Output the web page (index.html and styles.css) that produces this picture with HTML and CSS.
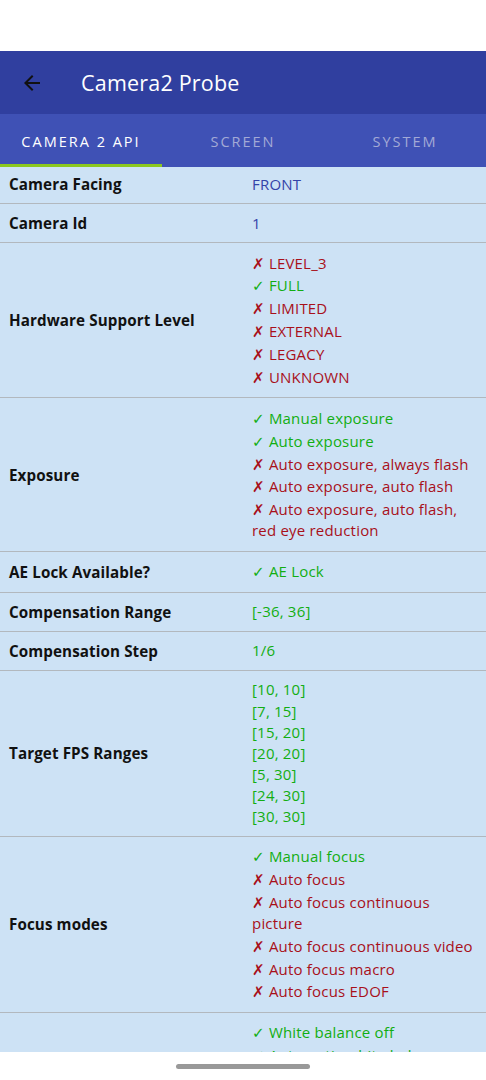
FILE: index.html
```html
<!DOCTYPE html>
<html>
<head>
<meta charset="utf-8">
<link rel="stylesheet" href="styles.css">
</head>
<body>
<div class="status"></div>
<header class="appbar">
  <svg class="back" viewBox="0 0 24 24" width="24" height="24"><path d="M20 11H7.83l5.59-5.59L12 4l-8 8 8 8 1.41-1.41L7.83 13H20v-2z" fill="#111"/></svg>
  <h1 class="title">Camera2 Probe</h1>
</header>
<nav class="tabs">
  <div class="tab active">CAMERA 2 API</div>
  <div class="tab">SCREEN</div>
  <div class="tab">SYSTEM</div>
</nav>
<main class="list">
  <div class="row first"><div class="label">Camera Facing</div><div class="vals"><div class="v blue">FRONT</div></div></div>
  <div class="row"><div class="label">Camera Id</div><div class="vals"><div class="v blue">1</div></div></div>
  <div class="row"><div class="label">Hardware Support Level</div><div class="vals">
    <div class="v no"><span class="g">✗</span> LEVEL_3</div>
    <div class="v yes"><span class="g">✓</span> FULL</div>
    <div class="v no"><span class="g">✗</span> LIMITED</div>
    <div class="v no"><span class="g">✗</span> EXTERNAL</div>
    <div class="v no"><span class="g">✗</span> LEGACY</div>
    <div class="v no"><span class="g">✗</span> UNKNOWN</div>
  </div></div>
  <div class="row"><div class="label">Exposure</div><div class="vals">
    <div class="v yes"><span class="g">✓</span> Manual exposure</div>
    <div class="v yes"><span class="g">✓</span> Auto exposure</div>
    <div class="v no"><span class="g">✗</span> Auto exposure, always flash</div>
    <div class="v no"><span class="g">✗</span> Auto exposure, auto flash</div>
    <div class="v no"><span class="g">✗</span> Auto exposure, auto flash, red eye reduction</div>
  </div></div>
  <div class="row"><div class="label">AE Lock Available?</div><div class="vals"><div class="v yes"><span class="g">✓</span> AE Lock</div></div></div>
  <div class="row"><div class="label">Compensation Range</div><div class="vals"><div class="v plain">[-36, 36]</div></div></div>
  <div class="row"><div class="label">Compensation Step</div><div class="vals"><div class="v plain">1/6</div></div></div>
  <div class="row"><div class="label">Target FPS Ranges</div><div class="vals">
    <div class="v plain">[10, 10]</div>
    <div class="v plain">[7, 15]</div>
    <div class="v plain">[15, 20]</div>
    <div class="v plain">[20, 20]</div>
    <div class="v plain">[5, 30]</div>
    <div class="v plain">[24, 30]</div>
    <div class="v plain">[30, 30]</div>
  </div></div>
  <div class="row"><div class="label">Focus modes</div><div class="vals">
    <div class="v yes"><span class="g">✓</span> Manual focus</div>
    <div class="v no"><span class="g">✗</span> Auto focus</div>
    <div class="v no"><span class="g">✗</span> Auto focus continuous picture</div>
    <div class="v no"><span class="g">✗</span> Auto focus continuous video</div>
    <div class="v no"><span class="g">✗</span> Auto focus macro</div>
    <div class="v no"><span class="g">✗</span> Auto focus EDOF</div>
  </div></div>
  <div class="row"><div class="label">White Balance</div><div class="vals">
    <div class="v yes"><span class="g">✓</span> White balance off</div>
    <div class="v yes"><span class="g">✓</span> Automatic white balance</div>
    <div class="v yes"><span class="g">✓</span> Incandescent</div>
    <div class="v yes"><span class="g">✓</span> Fluorescent</div>
    <div class="v yes"><span class="g">✓</span> Warm fluorescent</div>
    <div class="v yes"><span class="g">✓</span> Daylight</div>
    <div class="v yes"><span class="g">✓</span> Cloudy daylight</div>
  </div></div>
</main>
<div class="navbar"><div class="pill"></div></div>
</body>
</html>
```
FILE: styles.css
```css
html, body {
  margin: 0;
  padding: 0;
  background: #fff;
  font-family: "Open Sans", "DejaVu Sans", sans-serif;
  overflow: hidden;
  height: 1080px;
}
.status {
  height: 51px;
  background: #fff;
}
.appbar {
  height: 63px;
  background: #303F9F;
  display: flex;
  align-items: center;
  padding-left: 20px;
}
.back {
  display: block;
}
.title {
  margin: 0 0 0 37px;
  font-size: 21.5px;
  font-weight: 400;
  color: #fff;
  letter-spacing: 0.2px;
}
.tabs {
  height: 53px;
  background: #3F51B5;
  display: grid;
  grid-template-columns: repeat(3, 1fr);
}
.tab {
  display: flex;
  align-items: center;
  justify-content: center;
  font-size: 14.5px;
  font-weight: 500;
  letter-spacing: 2px;
  color: #A3AAD6;
  box-sizing: border-box;
  border-bottom: 3px solid transparent;
  padding-top: 5px;
}
.tab.active {
  color: #fff;
  border-bottom-color: #8BC81E;
}
.list {
  background: #CDE2F5;
  height: 885px;
  overflow: hidden;
}
.row {
  display: grid;
  grid-template-columns: 243px 1fr;
  align-items: center;
  padding: 8.5px 10px 8.5px 9px;
  border-bottom: 1px solid #B2B8BE;
}
.row.first {
  padding-top: 6.5px;
  padding-bottom: 8.5px;
}
.label {
  font-size: 15.2px;
  font-weight: 700;
  color: #111;
  letter-spacing: 0.1px;
}
.vals {
  font-size: 15px;
  letter-spacing: 0.2px;
}
.v {
  line-height: 21.1px;
}
.v.yes, .v.no {
  padding: 0.9px 0;
}
.g {
  font-family: "DejaVu Sans", sans-serif;
  font-weight: 700;
  font-size: 15px;
  line-height: 15px;
}
.blue { color: #3443A8; }
.yes { color: #12AE12; }
.plain { color: #12AE12; }
.no { color: #A8101A; }
.navbar {
  position: fixed;
  left: 0;
  right: 0;
  bottom: 0;
  height: 28px;
  background: #fff;
  display: flex;
  justify-content: center;
  padding-top: 12px;
  box-sizing: border-box;
}
.pill {
  width: 134px;
  height: 5px;
  border-radius: 3px;
  background: #999;
}
```
